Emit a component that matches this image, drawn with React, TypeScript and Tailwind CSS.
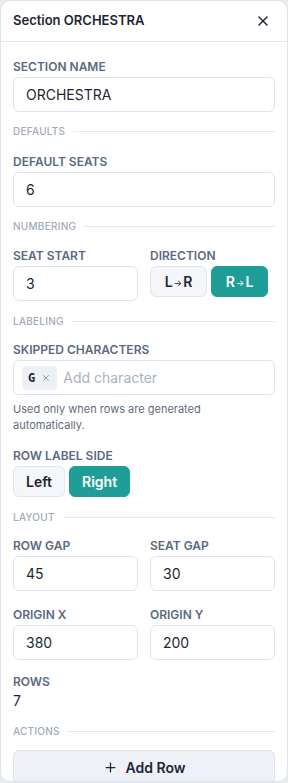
import { Plus, X } from "lucide-react";

const labelCls = "text-[12px] leading-4 font-semibold uppercase text-[#5b6a82]";
const inputCls =
  "h-[35px] w-full rounded-md border border-[#dfe4ec] bg-white px-3 flex items-center text-[14px] text-[#1e2633]";

function Field({ label, value, className = "" }: { label: string; value: string; className?: string }) {
  return (
    <div className={className}>
      <div className={labelCls}>{label}</div>
      <div className={`mt-0.5 ${inputCls}`}>{value}</div>
    </div>
  );
}

function SectionHead({ title, className = "" }: { title: string; className?: string }) {
  return (
    <div className={`flex items-center gap-2 h-[14px] ${className}`}>
      <span className="text-[10px] font-medium uppercase tracking-wide text-[#a2abb8]">{title}</span>
      <div className="flex-1 h-px bg-[#e6eaf0]" />
    </div>
  );
}

function Toggle({ options, active }: { options: string[]; active: number }) {
  return (
    <div className="flex gap-1">
      {options.map((o, i) => (
        <button
          key={o}
          className={
            i === active
              ? "h-[31px] px-3 rounded-md border border-[#1f9e98] bg-[#1f9e98] text-white text-[14px] font-semibold"
              : "h-[31px] px-3 rounded-md border border-[#e1e6ee] bg-[#f4f6fa] text-[#1e2633] text-[14px] font-semibold"
          }
        >
          {o}
        </button>
      ))}
    </div>
  );
}

function Arrow({ a, b }: { a: string; b: string }) {
  return (
    <span className="inline-flex items-center gap-[1px]">
      {a}
      <span className="text-[9px] font-normal mt-[2px]">→</span>
      {b}
    </span>
  );
}

export default function App() {
  return (
    <div className="h-[783px] w-[288px] bg-[#e8ecf2] font-['Inter',sans-serif]">
      <div className="h-[782px] w-full bg-white border border-[#dde3ea] rounded-[10px] overflow-hidden flex flex-col">
        {/* Header */}
        <div className="h-[41px] shrink-0 flex items-center justify-between px-3 border-b border-[#e6eaf0]">
          <span className="text-[13px] font-semibold text-[#1e2633]">Section ORCHESTRA</span>
          <X size={16} strokeWidth={2.2} className="text-[#1e2633] mr-1" />
        </div>

        {/* Body */}
        <div className="flex-1 overflow-hidden px-3 pt-[17px] flex flex-col">
          <Field label="Section Name" value="ORCHESTRA" />

          <SectionHead title="Defaults" className="mt-3" />
          <Field label="Default Seats" value="6" className="mt-4" />

          <SectionHead title="Numbering" className="mt-3" />
          <div className="mt-[15px] grid grid-cols-2 gap-3">
            <Field label="Seat Start" value="3" />
            <div>
              <div className={labelCls}>Direction</div>
              <div className="mt-0.5 flex gap-1">
                <button className="h-[31px] w-[57px] rounded-md border border-[#e1e6ee] bg-[#f4f6fa] text-[#1e2633] text-[14px] font-semibold">
                  <Arrow a="L" b="R" />
                </button>
                <button className="h-[31px] w-[57px] rounded-md border border-[#1f9e98] bg-[#1f9e98] text-white text-[14px] font-semibold">
                  <Arrow a="R" b="L" />
                </button>
              </div>
            </div>
          </div>

          <SectionHead title="Labeling" className="mt-[13px]" />
          <div className="mt-3.5">
            <div className={labelCls}>Skipped Characters</div>
            <div className="mt-0.5 h-[35px] w-full rounded-md border border-[#dfe4ec] bg-white pl-2 flex items-center gap-1.5">
              <span className="h-6 px-1.5 rounded bg-[#edf1f6] flex items-center gap-1.5 text-[12px] font-bold text-[#1e2633] font-['DejaVu_Sans_Mono',monospace]">
                G
                <X size={10} strokeWidth={1.6} className="text-[#6b7686]" />
              </span>
              <span className="text-[14px] text-[#a9b2bf]">Add character</span>
            </div>
            <p className="mt-1.5 text-[11px] leading-4 text-[#5f6b7c] pr-16">
              Used only when rows are generated automatically.
            </p>
          </div>

          <div className="mt-[15px]">
            <div className={labelCls}>Row Label Side</div>
            <div className="mt-0.5">
              <Toggle options={["Left", "Right"]} active={1} />
            </div>
          </div>

          <SectionHead title="Layout" className="mt-[13px]" />
          <div className="mt-3.5 grid grid-cols-2 gap-x-3">
            <Field label="Row Gap" value="45" />
            <Field label="Seat Gap" value="30" />
            <Field label="Origin X" value="380" className="mt-4" />
            <Field label="Origin Y" value="200" className="mt-4" />
          </div>

          <div className="mt-3.5">
            <div className={labelCls}>Rows</div>
            <div className="mt-[3px] text-[14px] leading-4 text-[#1e2633]">7</div>
          </div>

          <SectionHead title="Actions" className="mt-[15px]" />
          <button className="mt-3 shrink-0 h-[34px] w-full rounded-md border border-[#dfe4ec] bg-[#eef2f7] flex items-center justify-center gap-2 text-[14px] font-semibold text-[#1e2633]">
            <Plus size={15} strokeWidth={2} />
            Add Row
          </button>
        </div>
      </div>
    </div>
  );
}
